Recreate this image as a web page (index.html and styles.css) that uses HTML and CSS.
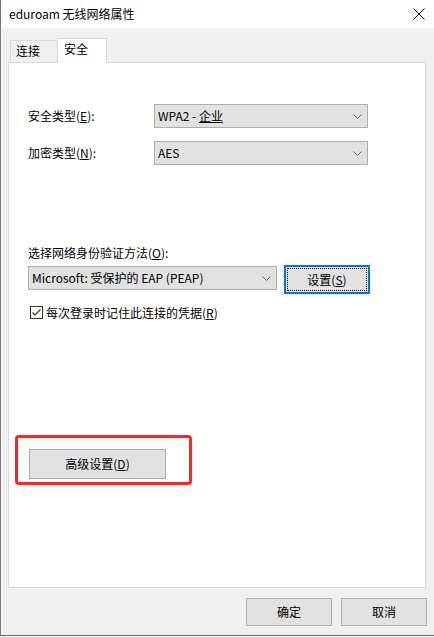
FILE: index.html
```html
<!DOCTYPE html>
<html lang="zh-CN">
<head>
<meta charset="utf-8">
<title>eduroam 无线网络属性</title>
<link rel="stylesheet" href="styles.css">
</head>
<body>
<div class="window">
  <div class="titlebar">
    <span class="title">eduroam 无线网络属性</span>
    <svg class="close" width="12" height="12" viewBox="0 0 12 12"><path d="M0.5 0.5 L11.5 11.5 M11.5 0.5 L0.5 11.5" stroke="#000" stroke-width="1" fill="none"/></svg>
  </div>
  <div class="content">
    <div class="tabs">
      <div class="tab">连接</div>
      <div class="tab active">安全</div>
    </div>
    <div class="panel">
      <div class="form-grid">
        <label class="label">安全类型(<u>E</u>):</label>
        <div class="select wide"><span>WPA2 - <u>企业</u></span><svg class="chev" width="9" height="5" viewBox="0 0 9 5"><path d="M0.5 0.5 L4.5 4.5 L8.5 0.5" stroke="#606060" fill="none"/></svg></div>
        <label class="label">加密类型(<u>N</u>):</label>
        <div class="select wide"><span>AES</span><svg class="chev" width="9" height="5" viewBox="0 0 9 5"><path d="M0.5 0.5 L4.5 4.5 L8.5 0.5" stroke="#606060" fill="none"/></svg></div>
      </div>
      <div class="section-label">选择网络身份验证方法(<u>O</u>):</div>
      <div class="method-row">
        <div class="select method"><span>Microsoft: 受保护的 EAP (PEAP)</span><svg class="chev" width="9" height="5" viewBox="0 0 9 5"><path d="M0.5 0.5 L4.5 4.5 L8.5 0.5" stroke="#606060" fill="none"/></svg></div>
        <button class="btn focus">设置(<u>S</u>)</button>
      </div>
      <div class="check-row">
        <svg class="checkbox" width="13" height="13" viewBox="0 0 13 13"><rect x="0.5" y="0.5" width="12" height="12" fill="#fff" stroke="#333"/><path d="M2.5 6.5 L5 9 L10.5 3.5" stroke="#333" stroke-width="1.2" fill="none"/></svg>
        <span>每次登录时记住此连接的凭据(<u>R</u>)</span>
      </div>
      <button class="btn advanced">高级设置(<u>D</u>)</button>
      <div class="highlight"></div>
    </div>
    <div class="actions">
      <button class="btn action">确定</button>
      <button class="btn action">取消</button>
    </div>
  </div>
</div>
</body>
</html>
```
FILE: styles.css
```css
html, body {
  margin: 0;
  padding: 0;
  background: #ffffff;
}
body {
  font-family: "Noto Sans CJK SC", "Noto Sans", sans-serif;
  font-size: 12px;
  color: #000;
}
u {
  text-decoration: underline;
  text-underline-offset: 1px;
}
.window {
  width: 434px;
  height: 636px;
  box-sizing: border-box;
  border-left: 1px solid #7a7a7a;
  border-bottom: 1px solid #646464;
  background: #f0f0f0;
}
.titlebar {
  height: 27px;
  background: #ffffff;
  display: flex;
  align-items: center;
  justify-content: space-between;
  padding: 0 9px 1px 8px;
}
.title {
  font-size: 12px;
  line-height: 16px;
}
.close {
  display: block;
  margin-right: 0;
}
.content {
  padding: 10px 7px 0 7px;
}
.tabs {
  display: flex;
  align-items: flex-end;
  margin-left: 2px;
  margin-bottom: -1px;
  height: 25px;
}
.tab {
  box-sizing: border-box;
  height: 22px;
  width: 47px;
  margin-bottom: 1px;
  border: 1px solid #d9d9d9;
  border-bottom: none;
  border-right: none;
  background: #f0f0f0;
  padding-left: 5px;
  line-height: 20px;
}
.tab.active {
  position: relative;
  z-index: 1;
  height: 25px;
  width: 50px;
  margin-bottom: 0;
  border-right: 1px solid #d9d9d9;
  background: #ffffff;
  padding-left: 6px;
  line-height: 20px;
}
.panel {
  position: relative;
  box-sizing: border-box;
  width: 418px;
  height: 526px;
  background: #ffffff;
  border: 1px solid #d9d9d9;
  padding: 41px 0 0 19px;
}
.form-grid {
  display: grid;
  grid-template-columns: 126px 214px;
  row-gap: 13px;
  align-items: center;
}
.label {
  line-height: 16px;
}
.select {
  box-sizing: border-box;
  height: 24px;
  background: #e1e1e1;
  border: 1px solid #adadad;
  display: flex;
  align-items: center;
  justify-content: space-between;
  padding: 0 5px 0 3px;
  line-height: 16px;
}
.select.wide {
  width: 214px;
}
.select.method {
  width: 249px;
  margin-top: 1px;
}
.chev {
  display: block;
}
.section-label {
  margin-top: 80px;
  line-height: 16px;
}
.method-row {
  display: flex;
  align-items: flex-start;
  gap: 7px;
  margin-top: 4px;
}
.btn {
  font-family: inherit;
  font-size: 12px;
  color: #000;
  box-sizing: border-box;
  background: #e1e1e1;
  border: 1px solid #adadad;
  border-radius: 0;
  padding: 0;
  margin: 0;
  line-height: 16px;
}
.btn.focus {
  width: 86px;
  height: 29px;
  border: 2px solid #0078d7;
  outline: 1px dotted #000;
  outline-offset: -4px;
}
.check-row {
  display: flex;
  align-items: center;
  gap: 3px;
  margin-top: 10px;
  margin-left: 2px;
  height: 16px;
}
.checkbox {
  display: block;
}
.advanced {
  display: block;
  width: 137px;
  height: 30px;
  margin-top: 129px;
  margin-left: 1px;
}
.highlight {
  position: absolute;
  left: 6px;
  top: 372px;
  width: 177px;
  height: 50px;
  box-sizing: border-box;
  border: 3px solid #ff2424;
  border-radius: 4px;
}
.actions {
  display: flex;
  justify-content: flex-end;
  gap: 9px;
  margin-top: 10px;
  padding-right: 0;
}
.btn.action {
  width: 86px;
  height: 28px;
}
```
